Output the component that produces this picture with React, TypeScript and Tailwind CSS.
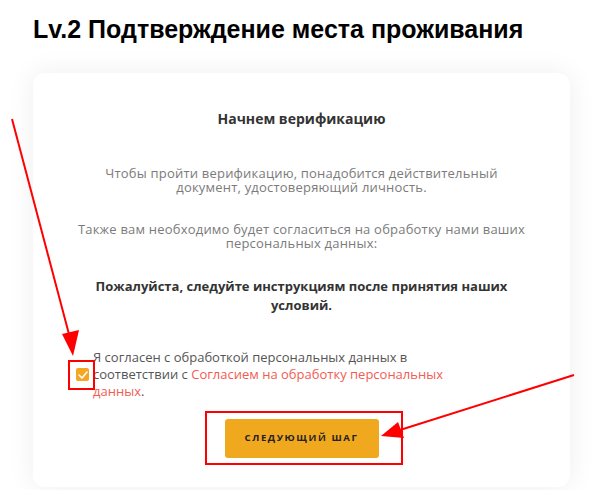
import { useState } from "react";

const body = "font-['Open_Sans','DejaVu_Sans',sans-serif]";

function Annotations() {
  return (
    <svg
      className="pointer-events-none absolute inset-0"
      width="603"
      height="490"
      viewBox="0 0 603 490"
    >
      {/* arrow to the checkbox */}
      <line x1="12" y1="119" x2="70" y2="338" stroke="#ff0000" strokeWidth="2" />
      <polygon points="62,334 79,330 73,356" fill="#ff0000" />
      <rect x="69" y="361" width="25" height="28" fill="none" stroke="#ff0000" strokeWidth="2" />

      {/* arrow to the button */}
      <line x1="574" y1="375" x2="400" y2="430" stroke="#ff0000" strokeWidth="2" />
      <polygon points="398,422 404,438 381,436" fill="#ff0000" />
      <rect x="206" y="412" width="196" height="52" fill="none" stroke="#ff0000" strokeWidth="2" />
    </svg>
  );
}

export default function App() {
  const [agreed, setAgreed] = useState(true);

  return (
    <div className="relative h-[490px] w-[603px] overflow-hidden bg-white">
      <h1 className="pl-[33px] pt-[14px] font-['Liberation_Sans',Arial,sans-serif] text-[25px] font-bold leading-[30px] text-black">
        Lv.2 Подтверждение места проживания
      </h1>

      <div
        className={`mx-[33px] mt-[29px] h-[414px] rounded-xl bg-white px-8 pt-[36px] shadow-[0_0_28px_rgba(0,0,0,0.07)] ${body}`}
      >
        <h2 className="text-center text-[14px] font-bold leading-5 text-[#333]">
          Начнем верификацию
        </h2>

        <p className="mx-auto mt-[37px] max-w-[420px] text-center text-[13px] leading-[14px] tracking-[0.2px] text-[#7b7b7b]">
          Чтобы пройти верификацию, понадобится действительный документ,
          удостоверяющий личность.
        </p>

        <p className="mx-auto mt-[28px] max-w-[470px] text-center text-[13px] leading-[14px] tracking-[0.2px] text-[#7b7b7b]">
          Также вам необходимо будет согласиться на обработку нами ваших
          персональных данных:
        </p>

        <p className="mx-auto mt-[27px] max-w-[430px] text-center text-[13px] font-bold leading-[19px] text-[#333]">
          Пожалуйста, следуйте инструкциям после принятия наших условий.
        </p>

        <div className="mt-[34px] flex items-center pl-[11px]">
          <button
            type="button"
            onClick={() => setAgreed((v) => !v)}
            className="mr-[4px] flex h-[13px] w-[13px] shrink-0 items-center justify-center rounded-[2px] bg-[#f5a623]"
          >
            {agreed && (
              <svg width="10" height="8" viewBox="0 0 10 8" fill="none">
                <path d="M1 4l3 3 5-6" stroke="#fff" strokeWidth="1.6" strokeLinecap="round" strokeLinejoin="round" />
              </svg>
            )}
          </button>
          <p className="max-w-[370px] text-[13px] leading-[17px] text-[#555]">
            Я согласен с обработкой персональных данных в соответствии с{" "}
            <a href="#" className="text-[#f25c54]">
              Согласием на обработку персональных данных
            </a>
            .
          </p>
        </div>

        <div className="mt-[19px] flex justify-center">
          <button
            type="button"
            className="h-[39px] w-[154px] rounded-[3px] bg-[#f0a81f] text-[9.5px] font-bold uppercase tracking-[1.6px] text-[#222]"
          >
            Следующий шаг
          </button>
        </div>
      </div>

      <Annotations />
    </div>
  );
}
